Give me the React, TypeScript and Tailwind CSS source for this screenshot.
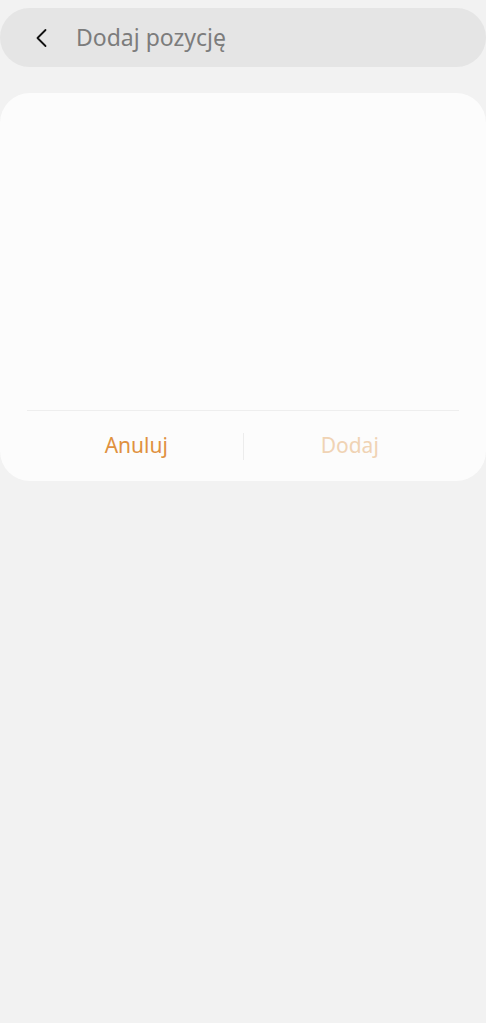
export default function App() {
  return (
    <div
      className="min-h-[1023px] w-full bg-[#f2f2f2]"
      style={{ fontFamily: '"Noto Sans", "Open Sans", sans-serif' }}
    >
      <div className="pt-2">
        <div className="flex h-[59px] items-center rounded-full bg-[#e5e5e5] pl-[34px]">
          <svg width="16" height="20" viewBox="0 0 16 20" className="shrink-0">
            <path d="M11.5 2 L3.5 10 L11.5 18" fill="none" stroke="#111" strokeWidth="1.8" strokeLinecap="round" strokeLinejoin="round" />
          </svg>
          <span className="ml-[26px] text-[23px] text-[#7c7c7c]">Dodaj pozycję</span>
        </div>
      </div>

      <div className="mt-[26px] flex h-[388px] flex-col rounded-[30px] bg-[#fcfcfc]">
        <div className="flex-1" />
        <div className="mx-[27px] h-px bg-[#eeeeee]" />
        <div className="mx-[30px] flex h-[70px] items-center">
          <button className="flex flex-1 justify-center pb-[1px] text-[21px] text-[#e0913f]">Anuluj</button>
          <div className="h-[27px] w-px bg-[#ececec]" />
          <button className="flex flex-1 justify-center pb-[1px] text-[21px] text-[#f0d3b4]">Dodaj</button>
        </div>
      </div>
    </div>
  );
}
